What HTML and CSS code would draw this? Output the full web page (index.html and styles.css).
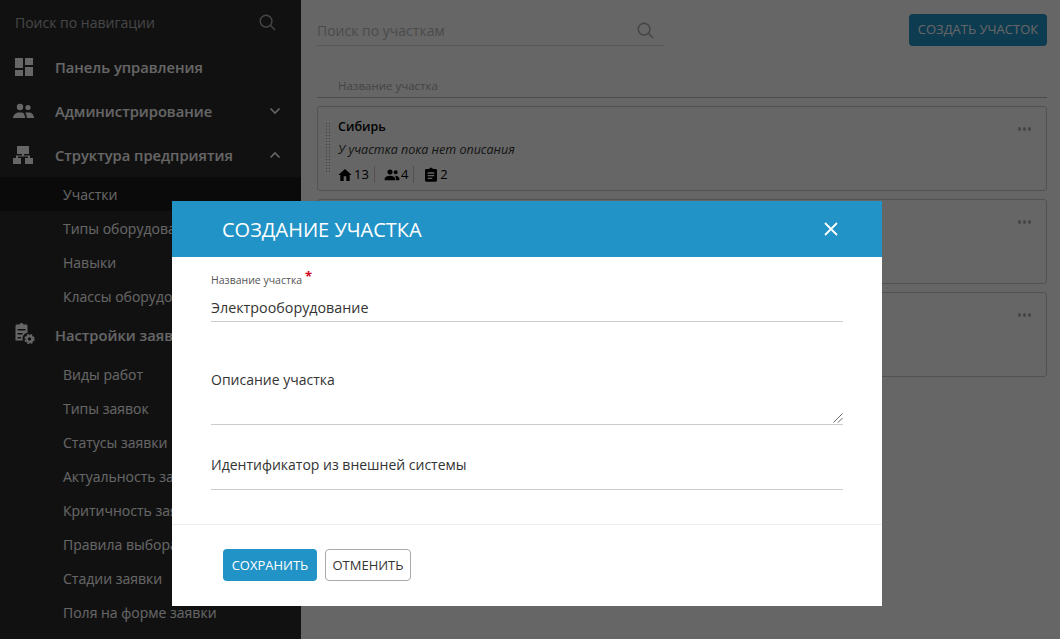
FILE: index.html
```html
<!DOCTYPE html>
<html>
<head>
<title>Участки</title>
<meta charset="UTF-8">
<link rel="stylesheet" href="styles.css">
</head>
<body>

<div class="app">
	<div class="sidebar">
		<div class="nav-search">
			<span>Поиск по навигации</span>
			<svg class="search-icon" width="17" height="17" viewBox="0 0 18 18"><circle cx="7.5" cy="7.5" r="6.2"/><path d="M12 12l5 5"/></svg>
		</div>
		<div class="nav-item">
			<svg class="nav-icon" width="24" height="24" viewBox="0 0 24 24"><path d="M3 3h8v10H3zM3 15h8v6H3zM13 12h8v9h-8zM13 3h8v7h-8z"/></svg>
			<span>Панель управления</span>
		</div>
		<div class="nav-item">
			<svg class="nav-icon" width="24" height="24" viewBox="0 0 24 24"><circle cx="8" cy="8" r="3.200"/><circle cx="16" cy="8.500" r="2.600"/><path d="M1 19c0-3 3-5.500 5.500-5.500h3c1.500 0 2.500.8 3 2.500l.8 3zM15 19l-.8-3.500c-.2-.8-.5-1.400-1-2h3.800c3 0 5 2.500 5 5.500z"/></svg>
			<span>Администрирование</span>
			<svg class="chevron" width="12" height="8" viewBox="0 0 12 8"><path d="M1.500 1.500L6 6l4.500-4.500"/></svg>
		</div>
		<div class="nav-item">
			<svg class="nav-icon" width="24" height="24" viewBox="0 0 24 24"><path d="M5 3h12v8h-5v1.500h6V15h3v6h-8v-6h3v-1.500H6V15h3v6H1v-6h3v-2.500h6V11H5z"/></svg>
			<span>Структура предприятия</span>
			<svg class="chevron" width="12" height="8" viewBox="0 0 12 8"><path d="M1.500 6.500L6 2l4.500 4.500"/></svg>
		</div>
		<div class="sub-list">
			<div class="sub-item active">Участки</div>
			<div class="sub-item">Типы оборудования</div>
			<div class="sub-item">Навыки</div>
			<div class="sub-item">Классы оборудования</div>
		</div>
		<div class="nav-item">
			<svg class="nav-icon" width="24" height="24" viewBox="0 0 24 24"><path fill-rule="evenodd" d="M5 1.500h2.500C8 .5 8.500 0 9.500 0s1.500.5 2 1.500H14c1 0 1.500.7 1.500 1.500v7c-2.500 0-5 2-5 5.500 0 .7.100 1.300.3 2H3.500V3c0-.8.500-1.500 1.500-1.500zM5.500 6v1.500h8V6zm0 4v1.500h5V10zm0 4v1.500h3.500V14z"/><circle cx="17.500" cy="16" r="2.800" fill="none" stroke="#fff" stroke-width="2.200"/><circle cx="17.500" cy="16" r="4.400" fill="none" stroke="#fff" stroke-width="1.500" stroke-dasharray="2 1.500"/></svg>
			<span>Настройки заявок</span>
		</div>
		<div class="sub-list">
			<div class="sub-item">Виды работ</div>
			<div class="sub-item">Типы заявок</div>
			<div class="sub-item">Статусы заявки</div>
			<div class="sub-item">Актуальность заявки</div>
			<div class="sub-item">Критичность заявки</div>
			<div class="sub-item">Правила выбора</div>
			<div class="sub-item">Стадии заявки</div>
			<div class="sub-item">Поля на форме заявки</div>
		</div>
	</div>

	<div class="main">
		<div class="toolbar">
			<div class="area-search">
				<span>Поиск по участкам</span>
				<svg class="area-search-icon" width="17" height="17" viewBox="0 0 18 18"><circle cx="7.500" cy="7.500" r="6.200"/><path d="M12 12l5 5"/></svg>
			</div>
			<button class="create-btn">СОЗДАТЬ УЧАСТОК</button>
		</div>
		<div class="table-head">Название участка</div>

		<div class="card">
			<div class="grip"></div>
			<div class="card-body">
				<div class="card-title">Сибирь</div>
				<div class="card-desc">У участка пока нет описания</div>
				<div class="card-stats">
					<span class="stat">
						<svg width="16" height="16" viewBox="0 0 24 24"><path d="M10 21v-7h4v7h5v-9h3L12 3 2 12h3v9z"/></svg>13
					</span>
					<span class="stat">
						<svg width="16" height="16" viewBox="0 0 24 24"><circle cx="9" cy="7.500" r="3.800"/><circle cx="17.500" cy="8" r="3"/><path d="M1 20v-2.500c0-3 5-4.500 8-4.500s8 1.500 8 4.500V20zM18 20v-3c0-1.500-.8-2.800-2-3.800 3-.3 7 1.200 7 3.800v3z"/></svg>4
					</span>
					<span class="stat">
						<svg width="16" height="16" viewBox="0 0 24 24"><path d="M19 3h-4.200C14.400 1.800 13.300 1 12 1s-2.400.8-2.800 2H5c-1.100 0-2 .9-2 2v15c0 1.100.9 2 2 2h14c1.100 0 2-.9 2-2V5c0-1.100-.9-2-2-2zM7 8h10v2H7zm0 4h10v2H7zm0 4h7v2H7z"/></svg>2
					</span>
				</div>
			</div>
			<div class="dots"><i></i><i></i><i></i></div>
		</div>
		<div class="card">
			<div class="grip"></div>
			<div class="card-body"></div>
			<div class="dots"><i></i><i></i><i></i></div>
		</div>
		<div class="card">
			<div class="grip"></div>
			<div class="card-body"></div>
			<div class="dots"><i></i><i></i><i></i></div>
		</div>
	</div>
</div>

<div class="overlay">
	<div class="modal">
		<div class="modal-head">
			<span>СОЗДАНИЕ УЧАСТКА</span>
			<svg class="close" width="14" height="14" viewBox="0 0 14 14"><path d="M1 1l12 12M13 1L1 13"/></svg>
		</div>
		<div class="modal-body">
			<div class="field field-name">
				<div class="small-label">Название участка <b>*</b></div>
				<div class="value">Электрооборудование</div>
			</div>
			<div class="field field-desc">
				<div class="value">Описание участка</div>
				<svg class="resize" width="10" height="10" viewBox="0 0 10 10"><path d="M0.500 9.500l9-9M5 9.500l4.500-4.500"/></svg>
			</div>
			<div class="field field-ext">
				<div class="value">Идентификатор из внешней системы</div>
			</div>
		</div>
		<div class="modal-foot">
			<button class="save-btn">СОХРАНИТЬ</button>
			<button class="cancel-btn">ОТМЕНИТЬ</button>
		</div>
	</div>
</div>

</body>
</html>
```

FILE: styles.css
```css
* {font-family: "Open Sans", sans-serif; box-sizing: border-box}

html, body {
	height: 100%;
	margin: 0;
	overflow: hidden;
}

.app {
	display: flex;
	height: 639px;
	background: #fff;
}

/* sidebar */

.sidebar {
	width: 301px;
	flex: none;
	background: #2c2c2c;
	color: #fff;
	overflow: hidden;
}

.nav-search {
	display: flex;
	align-items: center;
	justify-content: space-between;
	height: 45px;
	padding: 0 25px 0 15px;
	font-size: 14px;
	color: #b0b0b0;
}

.search-icon, .area-search-icon {
	fill: none;
	stroke: currentColor;
	stroke-width: 1.5;
}

.nav-item {
	display: flex;
	align-items: center;
	height: 44px;
	padding: 0 20px 0 12px;
	font-size: 14.700px;
	font-weight: 600;
	color: #fff;
}

.nav-item span {
	margin-left: 19px;
	flex: 1;
	white-space: nowrap;
}

.nav-icon {fill: #fff}

.chevron {
	fill: none;
	stroke: #fff;
	stroke-width: 1.600;
}

.sub-item {
	height: 34px;
	line-height: 36px;
	padding-left: 63px;
	font-size: 14px;
	white-space: nowrap;
}

.sub-item.active {background: #1a1a1a}

/* main */

.main {
	flex: 1;
	padding: 14px 13px 0 16px;
	color: #000;
}

.toolbar {
	display: flex;
	justify-content: space-between;
	height: 32px;
}

.area-search {
	display: flex;
	align-items: center;
	justify-content: space-between;
	width: 348px;
	height: 31px;
	margin-top: 1px;
	padding: 0 11px 0 0;
	border-bottom: 1px solid #ddd;
	font-size: 14px;
	color: #bbb;
}

.area-search-icon {color: #aaa}

.create-btn {
	width: 138px;
	height: 32px;
	padding: 0 0 2px;
	border: 0;
	border-radius: 4px;
	background: #2193c7;
	color: #fff;
	font-size: 13px;
}

.table-head {
	height: 22px;
	margin: 30px 0 8px;
	padding: 2px 0 0 21px;
	border-bottom: 1px solid #bbb;
	font-size: 11.500px;
	color: #aaa;
	line-height: 16px;
}

.card {
	display: flex;
	height: 85px;
	margin-bottom: 8px;
	border: 1px solid #ccc;
	border-radius: 3px;
}

.grip {
	width: 5px;
	height: 52px;
	margin: 15px 0 0 7px;
	background-image: radial-gradient(#999 1px, transparent 1px);
	background-size: 3px 3px;
}

.card-body {
	flex: 1;
	padding: 11px 0 0 8px;
}

.card-title {
	font-size: 12.500px;
	font-weight: 600;
	line-height: 18px;
}

.card-desc {
	margin-top: 5px;
	font-size: 12.500px;
	font-style: italic;
	color: #333;
	line-height: 17px;
}

.card-stats {
	display: flex;
	margin: 8px 0 0 -1px;
	font-size: 13px;
	line-height: 17px;
}

.stat {
	display: flex;
	align-items: center;
	gap: 1px;
	padding-right: 5px;
	margin-right: 9px;
	border-right: 1px solid #ccc;
}

.stat:last-child {border-right: 0}

.dots {
	display: flex;
	gap: 2px;
	margin: 20px 15px 0 0;
}

.dots i {
	width: 3px;
	height: 4px;
	background: #aaa;
	border-radius: 50%;
}

/* modal */

.overlay {
	position: absolute;
	top: 0;
	left: 0;
	right: 0;
	bottom: 0;
	background: rgba(0, 0, 0, .6);
}

.modal {
	position: absolute;
	left: 172px;
	top: 201px;
	width: 710px;
	height: 405px;
	background: #fff;
}

.modal-head {
	display: flex;
	align-items: center;
	justify-content: space-between;
	height: 56px;
	padding: 0 44px 0 50px;
	background: #2193c7;
	color: #fff;
	font-size: 20px;
}

.close {
	fill: none;
	stroke: #fff;
	stroke-width: 1.800;
}

.modal-body {
	height: 268px;
	padding: 0 39px;
	border-bottom: 1px solid #eee;
}

.field {
	position: relative;
	border-bottom: 1px solid #ccc;
	color: #333;
}

.field-name {
	height: 65px;
	padding-top: 15px;
}

.field-desc {
	height: 103px;
	padding-top: 48px;
}

.field-ext {
	height: 65px;
	padding-top: 30px;
}

.small-label {
	font-size: 10.500px;
	line-height: 15px;
	color: #555;
}

.small-label b {
	position: relative;
	top: -3px;
	color: #d0021b;
	font-size: 13px;
}

.value {
	font-size: 14px;
	line-height: 20px;
}

.field-name .value {
	margin-top: 10px;
	font-size: 14.300px;
}

.resize {
	position: absolute;
	right: 0;
	bottom: 1px;
	fill: none;
	stroke: #666;
	stroke-width: 1;
}

.modal-foot {
	display: flex;
	gap: 8px;
	padding: 24px 51px;
}

.modal-foot button {
	height: 32px;
	border-radius: 4px;
	font-size: 13px;
	padding: 0;
}

.save-btn {
	width: 94px;
	border: 0;
	background: #2193c7;
	color: #fff;
}

.cancel-btn {
	width: 86px;
	border: 1px solid #aaa;
	background: #fff;
	color: #333;
}
```
